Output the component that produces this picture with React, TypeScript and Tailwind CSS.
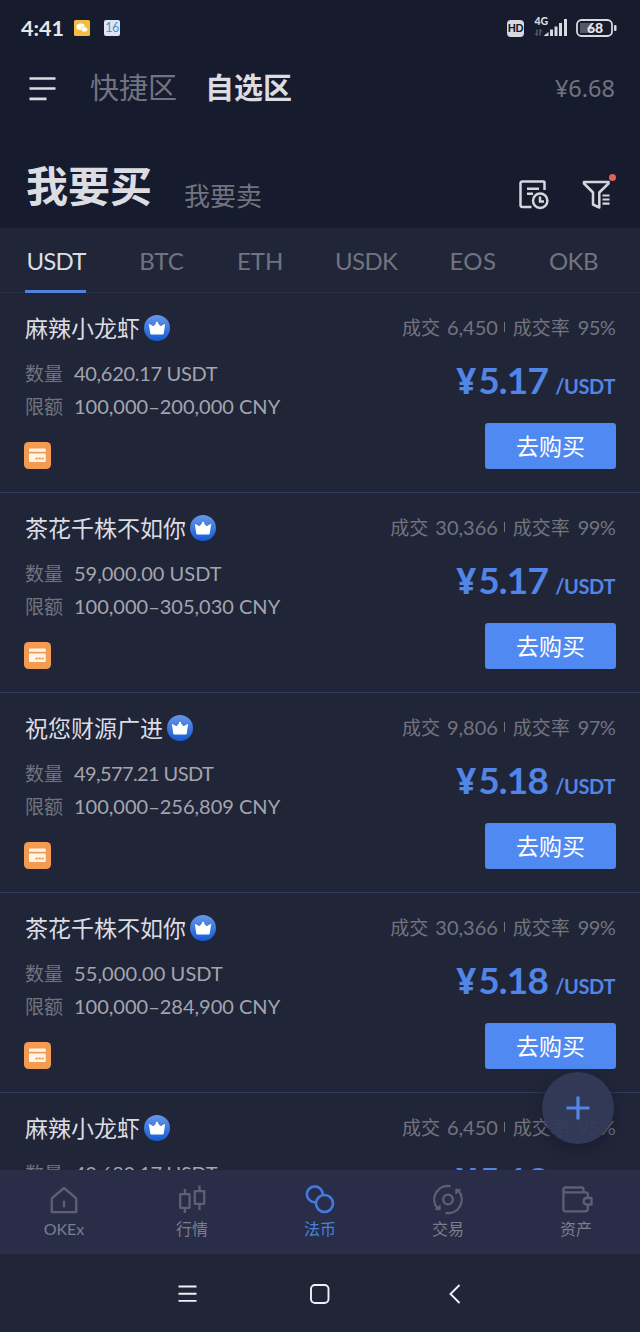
import type { ReactNode } from "react";

type Offer = {
  id: number;
  name: string;
  amount: string;
  limit: string;
  deals: string;
  rate: string;
  price: string;
  amountSpacing: string;
};

const offers: Offer[] = [
  { id: 1, name: "麻辣小龙虾", amount: "40,620.17", limit: "100,000–200,000", deals: "6,450", rate: "95%", price: "5.17", amountSpacing: "tracking-[-0.3px]" },
  { id: 2, name: "茶花千株不如你", amount: "59,000.00", limit: "100,000–305,030", deals: "30,366", rate: "99%", price: "5.17", amountSpacing: "tracking-normal" },
  { id: 3, name: "祝您财源广进", amount: "49,577.21", limit: "100,000–256,809", deals: "9,806", rate: "97%", price: "5.18", amountSpacing: "tracking-[-0.6px]" },
  { id: 4, name: "茶花千株不如你", amount: "55,000.00", limit: "100,000–284,900", deals: "30,366", rate: "99%", price: "5.18", amountSpacing: "tracking-[0.1px]" },
  { id: 5, name: "麻辣小龙虾", amount: "40,680.17", limit: "100,000–200,000", deals: "6,450", rate: "95%", price: "5.18", amountSpacing: "tracking-[-0.3px]" },
];

const coins = [
  { name: "USDT", className: "relative w-[60px] tracking-[-0.8px] text-[#dcdde2]" },
  { name: "BTC", className: "w-[47px] text-[#71747f]" },
  { name: "ETH", className: "w-[46px] text-[#71747f]" },
  { name: "USDK", className: "w-[62px] tracking-[-0.6px] text-[#71747f]" },
  { name: "EOS", className: "w-[48px] tracking-[0.5px] text-[#71747f]" },
  { name: "OKB", className: "w-[48px] tracking-[-0.6px] text-[#71747f]" },
];

function StatusBar() {
  return (
    <div className="flex h-14 shrink-0 items-center justify-between pl-[21px] pr-[23px]">
      <div className="flex items-center">
        <span className="mt-0.5 w-[53px] font-['Lato'] text-[21.5px] font-bold leading-none text-[#e6e7ec]">4:41</span>
        <svg width="16" height="16" viewBox="0 0 16 16">
          <rect width="16" height="16" rx="1.5" fill="#f3bd42" />
          <ellipse cx="6.6" cy="6.8" rx="4.2" ry="3.2" fill="#fff" />
          <ellipse cx="10.4" cy="9.4" rx="3.2" ry="2.5" fill="#fff" stroke="#f3bd42" strokeWidth="0.5" />
        </svg>
        <span className="ml-3.5 flex size-4 items-center justify-center rounded-[2px] bg-[#dfe5ee] font-['Lato'] text-[12.5px] leading-none tracking-[-0.5px] text-[#4396d8]">16</span>
      </div>
      <div className="flex items-center">
        <span className="-ml-px mr-px flex h-[17px] w-[17px] items-center justify-center rounded-[4px] bg-[#d8d9de] font-['Lato'] text-[10.5px] font-black leading-none tracking-[-0.3px] text-[#171b2e]">HD</span>
        <svg className="ml-[9px] overflow-visible" width="36" height="20" viewBox="0 0 36 20">
          <text x="0.5" y="7" fontFamily="Lato" fontSize="10.5" fontWeight="900" fill="#d8d9de">4G</text>
          <g stroke="#777b88" strokeWidth="1" fill="none">
            <path d="M3 11.5v6M3 17.5l-2-2M6 17.5v-6M6 11.5l2 2" />
          </g>
          <g fill="#d8d9de">
            <path d="M9.5 18l5-4v4z" />
            <rect x="16" y="11.5" width="3" height="6.5" />
            <rect x="20.5" y="8.5" width="3" height="9.5" />
            <rect x="25" y="5" width="3" height="13" />
            <rect x="30" y="1" width="3" height="17" />
          </g>
        </svg>
        <svg className="ml-[6px]" width="41" height="18" viewBox="0 0 41 18">
          <rect x="4" y="4" width="12" height="10" fill="#555967" />
          <rect x="1" y="1" width="35" height="16" rx="4.5" fill="none" stroke="#d8d9de" strokeWidth="1.8" />
          <rect x="38" y="6" width="2.5" height="6" rx="1" fill="#d8d9de" />
          <text x="19" y="13.8" textAnchor="middle" fontFamily="Lato" fontSize="14" fontWeight="900" fill="#e6e7ec">68</text>
        </svg>
      </div>
    </div>
  );
}

function Header() {
  return (
    <header className="flex h-[66px] shrink-0 items-center pl-[29px] pr-[25px]">
      <svg width="28" height="26" viewBox="0 0 28 26" stroke="#dcdde2" strokeWidth="2.7">
        <path d="M0.5 2.5h26M0.5 12.5h26M0.5 22.8h17" />
      </svg>
      <span className="-mt-[5px] ml-[33px] text-[29px] leading-none text-[#71747f]">快捷区</span>
      <span className="-mt-[5px] ml-[28px] text-[29px] font-bold leading-none text-[#dcdde2]">自选区</span>
      <span className="ml-auto font-['Noto_Sans'] text-[23.5px] leading-none text-[#71747f]">¥6.68</span>
    </header>
  );
}

function TitleRow() {
  return (
    <div className="flex h-[106px] shrink-0 items-end justify-between pl-[26px] pr-[28px]">
      <div className="flex items-end">
        <h1 className="pb-[23px] text-[42px] font-bold leading-none text-[#dcdde2]">我要买</h1>
        <span className="ml-[32px] pb-[20px] text-[26px] leading-none text-[#71747f]">我要卖</span>
      </div>
      <div className="flex pb-[18px]">
        <svg width="30" height="30" viewBox="0 0 30 30" fill="none" stroke="#d5d6dc" strokeWidth="2.5">
          <path d="M25.5 10V2.2Q25.5 1.5 24.8 1.5H3.5Q1.5 1.5 1.5 3.5V25Q1.5 27 3.5 27H12.5" />
          <path d="M8 8.7H20M8 13.7H14" />
          <circle cx="21.2" cy="20.7" r="7.2" />
          <path d="M21 16.5v5h4" />
        </svg>
        <div className="relative ml-[33px]">
          <svg width="30" height="30" viewBox="0 0 30 30" fill="none" stroke="#d5d6dc" strokeWidth="2.5" strokeLinejoin="round">
            <path d="M2 2H26.5V3.5L17.3 12.5V27.5L11 24.5V12.5L2 3.5Z" />
            <path d="M20.5 15.5h7M20.5 19.5h7M20.5 23.7h7" strokeWidth="2.2" />
          </svg>
          <span className="absolute -right-1 -top-[6px] size-[7px] rounded-full bg-[#e2605b]" />
        </div>
      </div>
    </div>
  );
}

function CoinTabs() {
  return (
    <nav className="flex h-[65px] shrink-0 gap-[52px] border-b border-[#2b3048] bg-[#212538] pl-[26px] pt-px font-['Lato'] text-[24px]">
      {coins.map((coin) => (
        <button key={coin.name} type="button" className={coin.className}>
          {coin.name}
          {coin.name === "USDT" && <span className="absolute -bottom-px -left-px h-[3px] w-[61px] bg-[#5182dc]" />}
        </button>
      ))}
    </nav>
  );
}

function CrownBadge({ id }: { id: number }) {
  return (
    <svg className="ml-1" width="26" height="26" viewBox="0 0 26 26">
      <defs>
        <linearGradient id={`crown-${id}`} x1="0" y1="0" x2="0" y2="1">
          <stop stopColor="#6796e8" />
          <stop offset="1" stopColor="#155bd5" />
        </linearGradient>
      </defs>
      <circle cx="13" cy="13" r="13" fill={`url(#crown-${id})`} />
      <path d="M4.8 8.8l4.7 2.5L13 7.2l3.5 4.1 4.7-2.5-1.5 9.900q-.2.7-.9.7H7.2q-.7 0-.9-.7z" fill="#fff" />
      <circle cx="13" cy="7.8" r="1.1" fill="#fff" />
    </svg>
  );
}

function CardBadge() {
  return (
    <svg className="-ml-px" width="27" height="27" viewBox="0 0 27 27">
      <rect width="27" height="27" rx="4.5" fill="#f49a51" />
      <path d="M5 7.5Q5 6.5 6 6.5H20.8Q21.8 6.5 21.8 7.5V9.8H5zM5 11.5H21.8V19Q21.8 20 20.8 20H6Q5 20 5 19z" fill="#fff5e8" />
      <path d="M11.5 16.5h8.5" stroke="#f49a51" strokeWidth="1.8" strokeDasharray="2.3 0.7" />
    </svg>
  );
}

function OfferRow({ offer }: { offer: Offer }) {
  return (
    <article className="flex h-[200.1px] shrink-0 justify-between border-b border-[#30385b] pl-[25px] pr-[24px]">
      <div className="pt-[21px]">
        <div className="flex h-7 items-center">
          <h2 className="-mt-[2px] text-[23px] leading-none text-[#dcdde2]">{offer.name}</h2>
          <CrownBadge id={offer.id} />
        </div>
        <dl className="mt-[14px] text-[19px] leading-[33px]">
          <div className="flex h-[33px]">
            <dt className="w-[49px] text-[#71747f]">数量</dt>
            <dd className={`pt-px font-['Lato'] text-[20px] text-[#a3a5ae] ${offer.amountSpacing}`}>{offer.amount} USDT</dd>
          </div>
          <div className="flex h-[33px]">
            <dt className="w-[49px] text-[#71747f]">限额</dt>
            <dd className="pt-px font-['Lato'] text-[20px] text-[#a3a5ae]">{offer.limit} CNY</dd>
          </div>
        </dl>
        <div className="mt-[20px]">
          <CardBadge />
        </div>
      </div>
      <div className="flex flex-col items-end pt-[21px]">
        <div className="-mt-px flex h-7 items-center pr-px text-[19px] text-[#71747f]">
          <span>成交</span>
          <span className="ml-[7px] font-['Lato'] text-[20px]">{offer.deals}</span>
          <span className="ml-[6px] mr-[8px] h-[10px] w-px bg-[#71747f]" />
          <span>成交率</span>
          <span className="ml-[8px] font-['Lato'] text-[20px] tracking-[-0.7px]">{offer.rate}</span>
        </div>
        <div className="mt-[16px] flex h-[46px] items-baseline pr-px font-['Lato'] font-bold leading-[46px] text-[#5186e8]">
          <span className="mr-[2px] font-['Noto_Sans'] text-[35px]">¥</span>
          <span className="text-[37px] tracking-[-0.8px]">{offer.price}</span>
          <span className="ml-[7px] text-[20px] tracking-[-0.4px]">/USDT</span>
        </div>
        <button type="button" className="mt-[20px] h-[46px] w-[131px] rounded-[3px] bg-[#4f89f1] pb-[2px] text-[23px] leading-none text-white">
          去购买
        </button>
      </div>
    </article>
  );
}

function TabItem({ label, active, children }: { label: string; active?: boolean; children: ReactNode }) {
  return (
    <button type="button" className={`flex flex-1 flex-col items-center pt-[13px] ${active ? "text-[#3f79e3]" : "text-[#5d6073]"}`}>
      <svg className="overflow-visible" width="32" height="32" viewBox="0 0 32 32" fill="none" stroke="currentColor" strokeWidth="2.3" strokeLinejoin="round">
        {children}
      </svg>
      <span className={`mt-[6px] font-['Lato','Noto_Sans_CJK_SC',sans-serif] text-[16px] leading-none ${active ? "text-[#4b80dc]" : "text-[#7b7e8b]"}`}>{label}</span>
    </button>
  );
}

function TabBar() {
  return (
    <nav className="flex h-[84px] shrink-0 bg-[#292d47]">
      <TabItem label="OKEx">
        <path d="M16 5L28.2 15.3V29.2H3.8V15.3ZM16 17.7v6.5" />
      </TabItem>
      <TabItem label="行情">
        <path d="M4.2 11.2h9.4v13.6H4.2zM8.9 6v5M8.9 25v5M18.8 8.2h9.4v12.6h-9.4zM23.5 2.5v5.5M23.5 21v6" />
      </TabItem>
      <TabItem label="法币" active>
        <circle cx="10.8" cy="11.3" r="7.9" strokeWidth="2.6" />
        <circle cx="20.5" cy="20.5" r="8.5" fill="#292d47" strokeWidth="2.6" />
      </TabItem>
      <TabItem label="交易">
        <circle cx="16" cy="16.5" r="4.8" />
        <path d="M18.5 3.1A13.6 13.6 0 0 0 5.3 25M26.7 8A13.6 13.6 0 0 1 13.5 29.9" />
        <path d="M3 26.5L8.2 27V22ZM29 6.5L23.8 6V11Z" fill="currentColor" strokeWidth="0.8" />
      </TabItem>
      <TabItem label="资产">
        <path d="M27.8 14.5V11.5Q27.8 9.3 25.6 9.3H5.5Q3.4 9.3 3.4 7T5.5 4.5H21.5Q23.5 4.5 23.5 6.5V9M3.4 7V26Q3.4 28.3 5.5 28.3H25.6Q27.8 28.3 27.8 26V22M31.5 15H26.5Q23.7 15 23.7 18.2T26.5 21.5H31.5Z" />
      </TabItem>
    </nav>
  );
}

function SystemBar() {
  return (
    <div className="flex h-[78px] shrink-0 items-center justify-center gap-[113px] pt-px">
      <svg width="20" height="20" viewBox="0 0 20 20" stroke="#f1f1f3" strokeWidth="1.9">
        <path d="M1.5 2.500h18M1.5 9.7h18M1.5 16.9h18" />
      </svg>
      <svg width="20" height="20" viewBox="0 0 20 20" fill="none" stroke="#f1f1f3" strokeWidth="1.9">
        <rect x="1" y="1" width="17.5" height="18" rx="4" />
      </svg>
      <svg width="20" height="20" viewBox="0 0 20 20" fill="none" stroke="#f1f1f3" strokeWidth="1.9">
        <path d="M16.5 1L7.5 10l9 9" />
      </svg>
    </div>
  );
}

export default function App() {
  return (
    <div className="relative flex h-[1332px] w-[640px] flex-col overflow-hidden bg-[#212538] font-['Noto_Sans_CJK_SC',sans-serif]">
      <div className="shrink-0 bg-[#171b2e]">
        <StatusBar />
        <Header />
        <TitleRow />
      </div>
      <CoinTabs />
      <main className="flex min-h-0 flex-1 flex-col overflow-hidden">
        {offers.map((offer) => (
          <OfferRow key={offer.id} offer={offer} />
        ))}
      </main>
      <TabBar />
      <SystemBar />
      <button type="button" aria-label="add" className="absolute right-[26px] top-[1072px] flex size-[72px] items-center justify-center rounded-full bg-[#333a58]/95 shadow-[0_6px_14px_rgba(15,18,34,0.4)]">
        <svg width="24" height="24" viewBox="0 0 24 24" stroke="#5186e8" strokeWidth="3.2">
          <path d="M0.5 12h23M12 0.5v23" />
        </svg>
      </button>
    </div>
  );
}
